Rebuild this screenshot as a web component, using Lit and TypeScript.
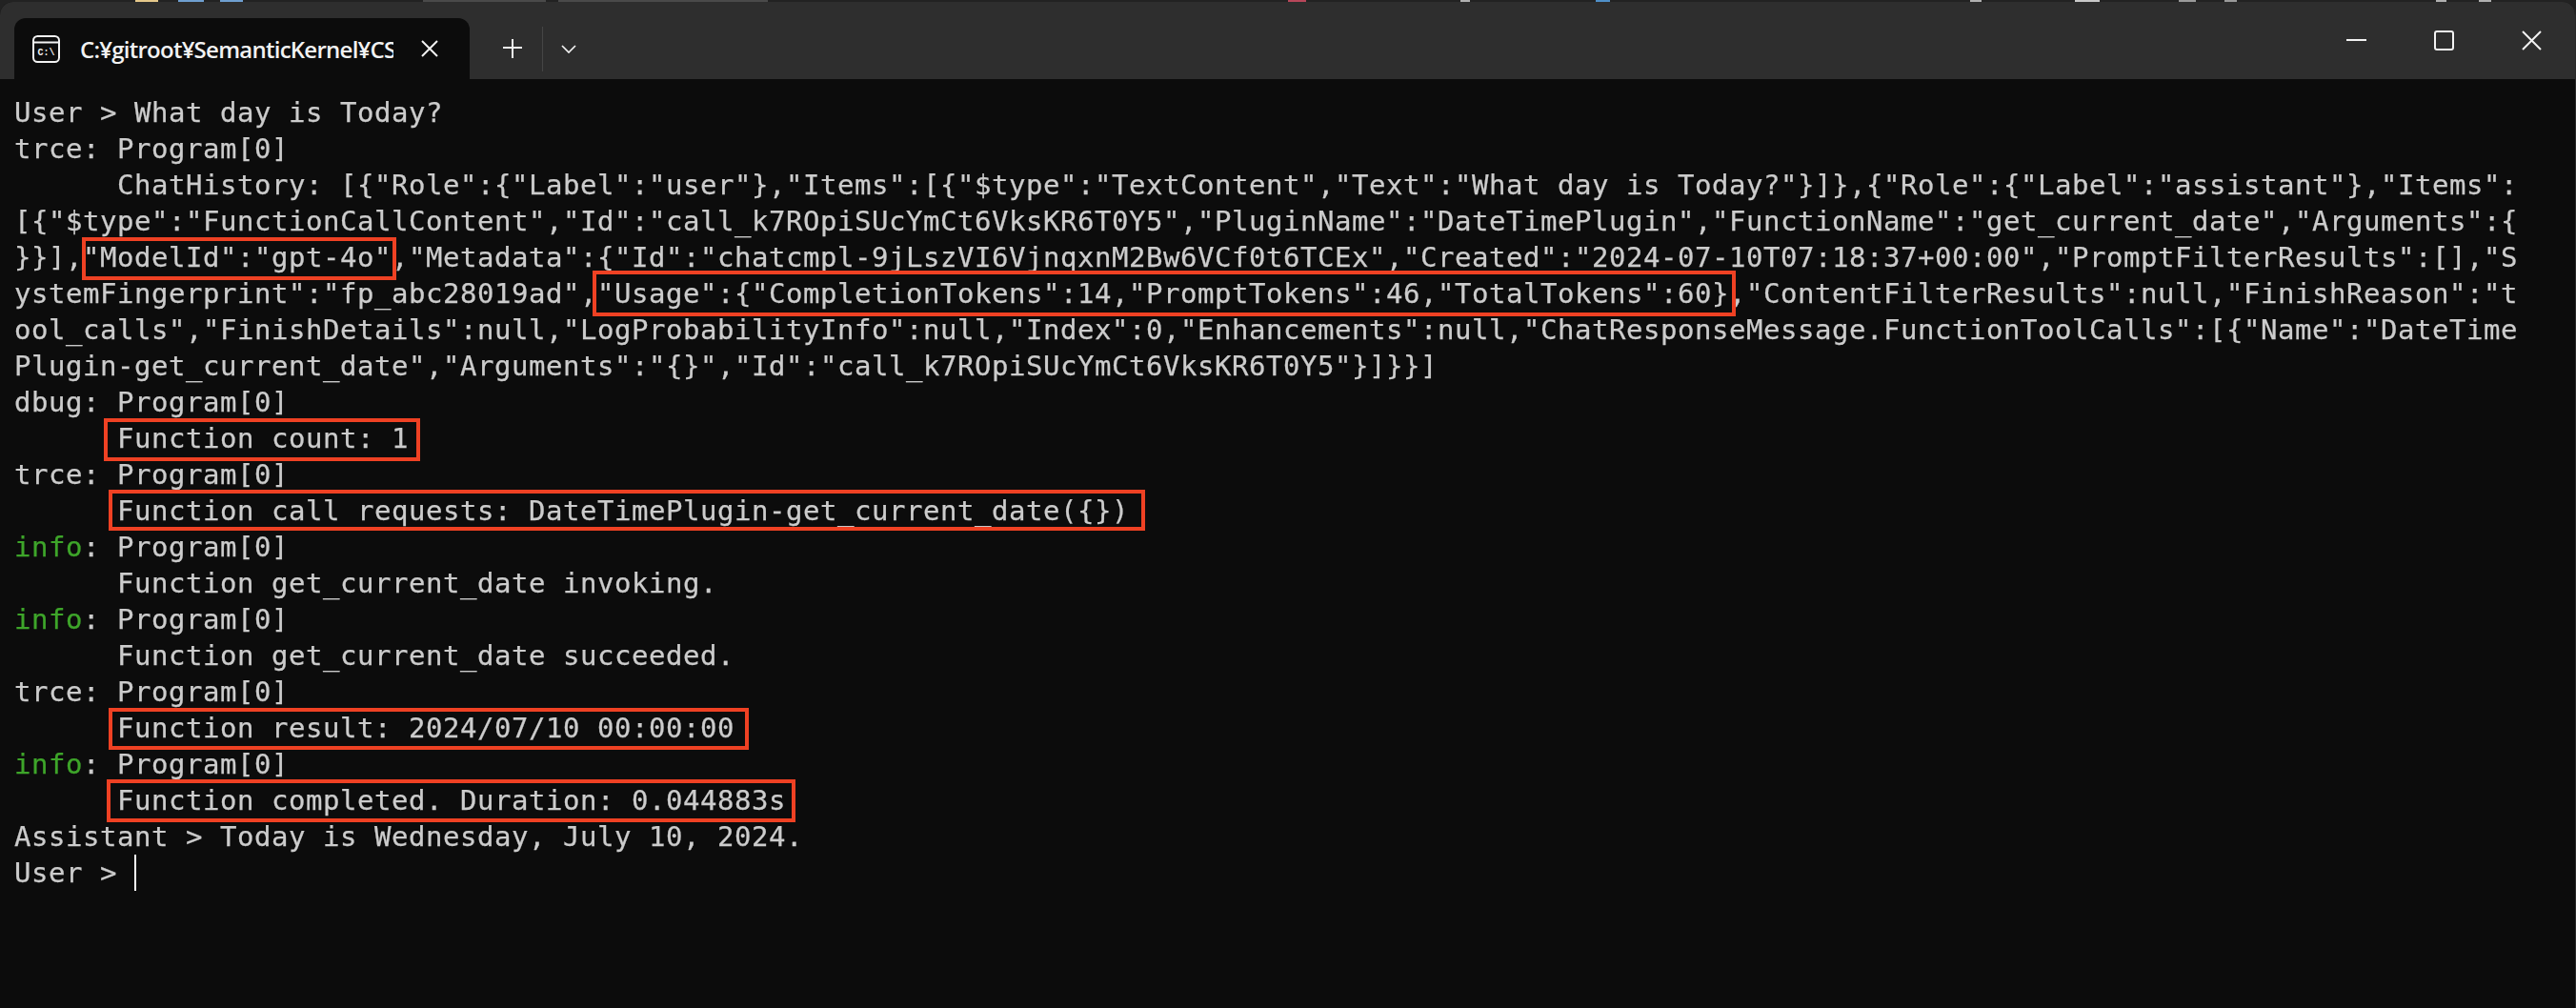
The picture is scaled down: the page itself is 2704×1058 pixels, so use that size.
import { LitElement, html, css } from "lit";
import { customElement } from "lit/decorators.js";

const rows: string[] = [
  'User > What day is Today?',
  'trce: Program[0]',
  '      ChatHistory: [{"Role":{"Label":"user"},"Items":[{"$type":"TextContent","Text":"What day is Today?"}]},{"Role":{"Label":"assistant"},"Items":',
  '[{"$type":"FunctionCallContent","Id":"call_k7ROpiSUcYmCt6VksKR6T0Y5","PluginName":"DateTimePlugin","FunctionName":"get_current_date","Arguments":{',
  '}}],"ModelId":"gpt-4o","Metadata":{"Id":"chatcmpl-9jLszVI6VjnqxnM2Bw6VCf0t6TCEx","Created":"2024-07-10T07:18:37+00:00","PromptFilterResults":[],"S',
  'ystemFingerprint":"fp_abc28019ad","Usage":{"CompletionTokens":14,"PromptTokens":46,"TotalTokens":60},"ContentFilterResults":null,"FinishReason":"t',
  'ool_calls","FinishDetails":null,"LogProbabilityInfo":null,"Index":0,"Enhancements":null,"ChatResponseMessage.FunctionToolCalls":[{"Name":"DateTime',
  'Plugin-get_current_date","Arguments":"{}","Id":"call_k7ROpiSUcYmCt6VksKR6T0Y5"}]}}]',
  'dbug: Program[0]',
  '      Function count: 1',
  'trce: Program[0]',
  '      Function call requests: DateTimePlugin-get_current_date({})',
  'info: Program[0]',
  '      Function get_current_date invoking.',
  'info: Program[0]',
  '      Function get_current_date succeeded.',
  'trce: Program[0]',
  '      Function result: 2024/07/10 00:00:00',
  'info: Program[0]',
  '      Function completed. Duration: 0.044883s',
  'Assistant > Today is Wednesday, July 10, 2024.',
  'User > ',
];

/* Hand-drawn red annotation rectangles: [left, top, right, bottom] in page pixels */
const TERM_TOP = 83;
const BOXES: [number, number, number, number][] = [
  [86, 249, 416, 294],
  [622, 284, 1822, 332],
  [109, 439, 441, 484],
  [114, 514, 1202, 557],
  [114, 743, 786, 787],
  [112, 818, 835, 863],
];

/* Slivers of whatever lies behind the window: [start x, width, colour] */
const BITS: [number, number, string][] = [
  [142, 24, "#e5c88a"],
  [187, 27, "#6f9fd0"],
  [231, 24, "#6f9fd0"],
  [444, 129, "#4a4a4a"],
  [586, 220, "#4a4a4a"],
  [1352, 19, "#b8475a"],
  [1533, 10, "#b0b0b0"],
  [1675, 15, "#4f8fc8"],
  [2068, 12, "#b0b0b0"],
  [2178, 26, "#c8c8c8"],
  [2287, 18, "#9a9a9a"],
  [2335, 13, "#9a9a9a"],
  [2557, 11, "#b0b0b0"],
  [2602, 13, "#b0b0b0"],
];

function renderRow(r: string, i: number) {
  if (r.startsWith("info:")) {
    return html`<span class="green">info</span>${r.slice(4)}`;
  }
  if (i === rows.length - 1) return html`${r}<span class="cursor"></span>`;
  return r;
}

function renderBits() {
  let x = 0;
  return BITS.map(([start, w, c]) => {
    const gap = start - x;
    x = start + w;
    return html`<i class="bit" style="margin-left:${gap}px;width:${w}px;background:${c}"></i>`;
  });
}

@customElement("app-root")
export class AppRoot extends LitElement {
  static styles = css`
    :host { display: block; width: 2704px; height: 1058px; overflow: hidden; background: #222222; }
    .strip { height: 2px; display: flex; }
    .bit { display: block; height: 2px; flex: none; }
    .win { height: 1056px; background: #0c0c0c; border-radius: 14px 14px 0 0; overflow: hidden; display: flex; flex-direction: column; border-right: 1px solid #2a2a2a; box-sizing: border-box; }
    .bar { flex: none; height: 81px; background: #2e2e2e; display: flex; align-items: flex-end; padding-left: 15px; color: #fff; }
    .tab { width: 478px; height: 64px; background: #0c0c0c; border-radius: 12px 12px 0 0; display: flex; align-items: center; flex: none; box-sizing: border-box; padding-left: 19px; }
    .tab-icon { width: 29px; height: 29px; flex: none; }
    .tab-title { width: 329px; margin-left: 21px; overflow: hidden; white-space: nowrap; font: 600 24px/32px "Open Sans", "Noto Sans", sans-serif; letter-spacing: -0.75px; color: #f2f2f2; flex: none; padding-top: 2px; }
    .tab-x { margin-left: 29px; width: 18px; height: 18px; flex: none; }
    .tools { display: flex; align-items: center; height: 64px; flex: none; }
    .plus { margin-left: 34px; width: 22px; height: 22px; flex: none; }
    .sep { margin-left: 20px; width: 1px; height: 47px; background: #454545; flex: none; }
    .chev { margin-left: 19px; width: 16px; height: 9px; flex: none; }
    .spacer { flex: 1; }
    .controls { display: flex; align-self: stretch; align-items: center; padding-right: 35px; }
    .controls svg { width: 21px; height: 21px; display: block; }
    .controls .g { margin-left: 71px; }
    .term { flex: 1; position: relative; padding: 16px 0 0 15px; font: 29px/38px "DejaVu Sans Mono", monospace; letter-spacing: 0.54px; -webkit-text-stroke: 0.25px #cccccc; color: #cccccc; filter: blur(0.45px); }
    .row { height: 38px; white-space: pre; }
    .green { color: #3ea52a; -webkit-text-stroke-color: #3ea52a; }
    .box { position: absolute; box-sizing: border-box; border: 4px solid #ef4123; }
    .cursor { display: inline-block; width: 2px; height: 38px; background: #ffffff; vertical-align: top; }
  `;

  render() {
    return html`<div class="strip">${renderBits()}</div>
    <div class="win">
      <div class="bar">
        <div class="tab">
          <svg class="tab-icon" viewBox="0 0 29 29" fill="none" stroke="#f2f2f2" stroke-width="2">
            <rect x="1" y="1" width="27" height="27" rx="4.5"></rect>
            <path d="M1 7.5h27"></path>
            <text x="14.5" y="21" font-family="Liberation Mono" font-weight="700" font-size="10" fill="#f2f2f2" stroke="none" text-anchor="middle">C:\\</text>
          </svg>
          <div class="tab-title">C:¥gitroot¥SemanticKernel¥CS</div>
          <svg class="tab-x" viewBox="0 0 18 18" stroke="#f2f2f2" stroke-width="2" fill="none"><path d="M1 1l16 16M17 1L1 17"></path></svg>
        </div>
        <div class="tools">
          <svg class="plus" viewBox="0 0 22 22" stroke="#f2f2f2" stroke-width="2" fill="none"><path d="M11 1v20M1 10h20"></path></svg>
          <div class="sep"></div>
          <svg class="chev" viewBox="0 0 16 9" stroke="#f2f2f2" stroke-width="1.7" fill="none"><path d="M1 1l7 7 7-7"></path></svg>
        </div>
        <div class="spacer"></div>
        <div class="controls">
          <svg viewBox="0 0 21 21" stroke="#f2f2f2" stroke-width="2" fill="none"><path d="M0 10h21"></path></svg>
          <svg class="g" viewBox="0 0 21 21" stroke="#f2f2f2" stroke-width="2" fill="none"><rect x="1" y="1" width="19" height="19" rx="2"></rect></svg>
          <svg class="g" viewBox="0 0 21 21" stroke="#f2f2f2" stroke-width="2" fill="none"><path d="M1 1l19 19M20 1L1 20"></path></svg>
        </div>
      </div>
      <div class="term">
        ${rows.map((r, i) => html`<div class="row">${renderRow(r, i)}</div>`)}
        ${BOXES.map(([l, t, r, b]) => html`<div class="box" style="left:${l}px;top:${t - TERM_TOP}px;width:${r - l}px;height:${b - t}px"></div>`)}
      </div>
    </div>`;
  }
}
